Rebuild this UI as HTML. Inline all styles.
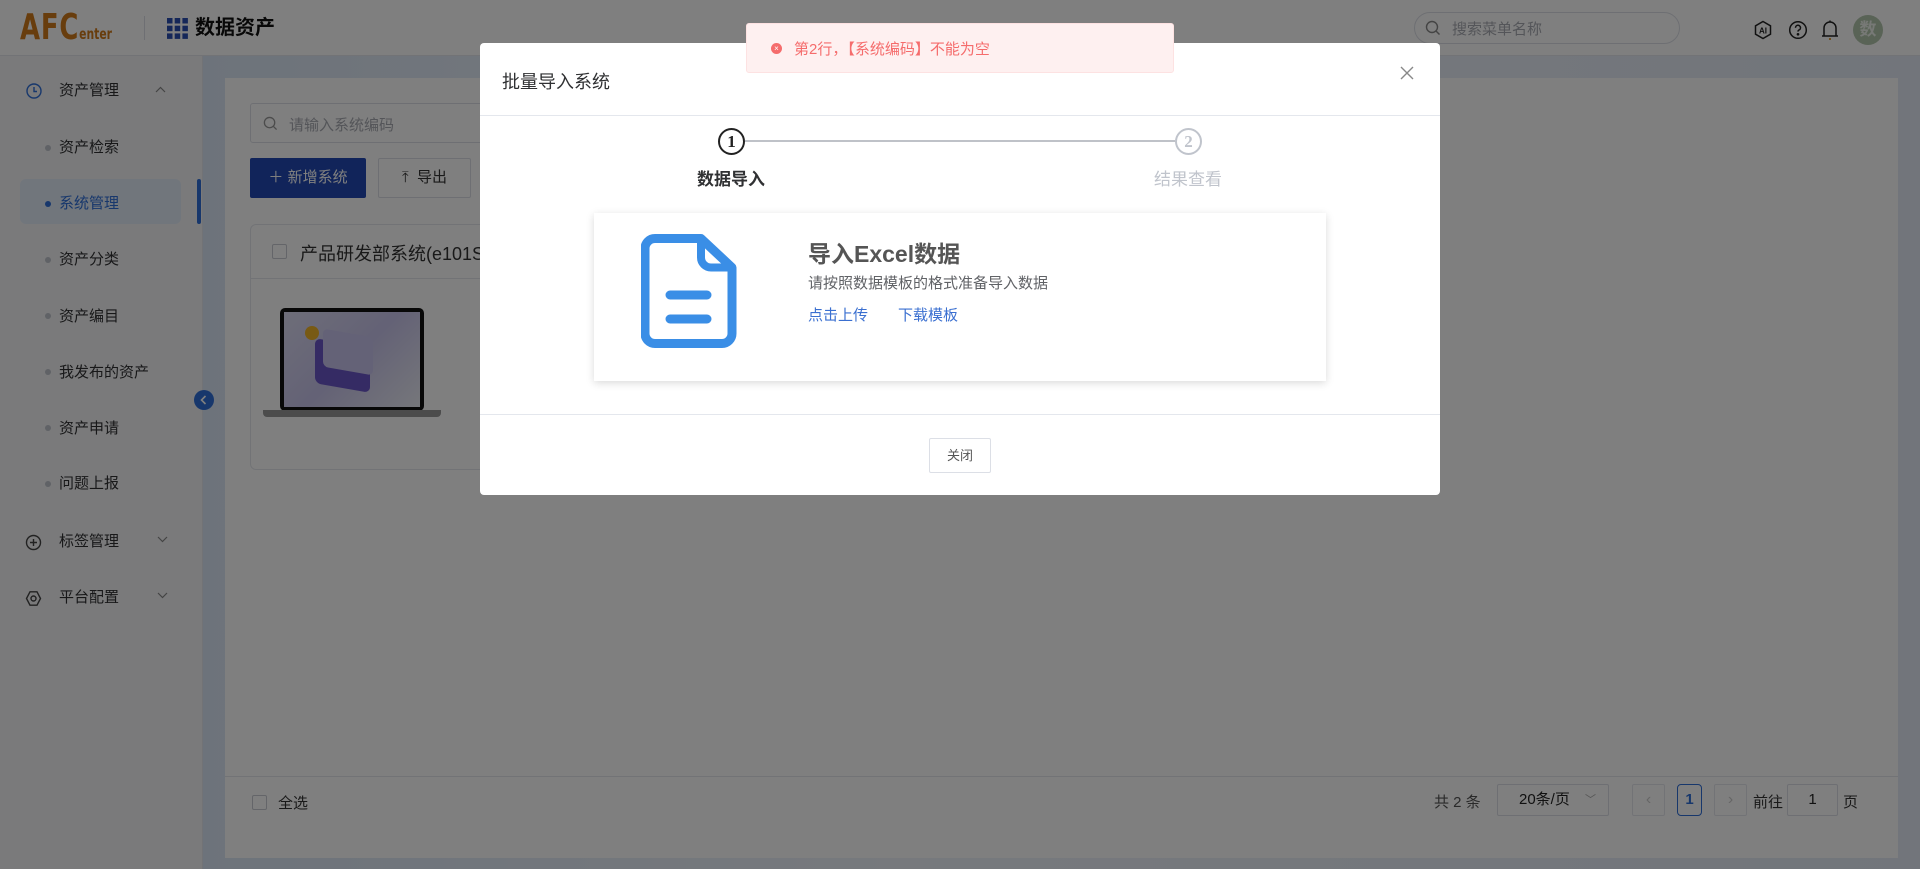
<!DOCTYPE html>
<html><head><meta charset="utf-8"><style>
*{box-sizing:border-box;margin:0;padding:0}
body{width:1920px;height:869px;overflow:hidden;position:relative;font-family:"Liberation Sans","Noto Sans CJK SC",sans-serif;background:#fff;color:#303133}
.abs{position:absolute}
.hdr{left:0;top:0;width:1920px;height:56px;background:#fff;border-bottom:1px solid #e4e7ed}
.side{left:0;top:56px;width:203px;height:813px;background:#f4f5f7;border-right:1px solid #e4e7ed}
.mi{position:absolute;left:59px;font-size:15px;color:#303133;line-height:20px}
.dot{position:absolute;left:45px;width:6px;height:6px;border-radius:50%;background:#c0c4cc}
.main{left:203px;top:56px;width:1717px;height:813px;background:linear-gradient(90deg,#dbe7f6,#eef3fb 40%,#e4ebf6)}
.panel{left:225px;top:78px;width:1673px;height:780px;background:#fff}
.ov{left:0;top:0;width:1920px;height:869px;background:rgba(0,0,0,.5)}
.modal{left:480px;top:43px;width:960px;height:452px;background:#fff;border-radius:4px}
</style></head><body>
<div class="abs hdr">
 <div class="abs" style="left:20px;top:6px;font-family:'DejaVu Sans Condensed','Liberation Sans',sans-serif;font-weight:bold;color:#d07a1a;font-size:36px;letter-spacing:1px;line-height:44px;transform:scaleX(.8);transform-origin:left">AFC<span style="font-size:15px;letter-spacing:0">enter</span></div>
 <div class="abs" style="left:144px;top:16px;width:1px;height:24px;background:#dcdfe6"></div>
 <svg class="abs" style="left:167px;top:18px" width="21" height="21" viewBox="0 0 21 21" fill="#2b4fb3"><rect x="0" y="0" width="5.5" height="5.5"/><rect x="7.7" y="0" width="5.5" height="5.5"/><rect x="15.4" y="0" width="5.5" height="5.5"/><rect x="0" y="7.7" width="5.5" height="5.5"/><rect x="7.7" y="7.7" width="5.5" height="5.5"/><rect x="15.4" y="7.7" width="5.5" height="5.5"/><rect x="0" y="15.4" width="5.5" height="5.5"/><rect x="7.7" y="15.4" width="5.5" height="5.5"/><rect x="15.4" y="15.4" width="5.5" height="5.5"/></svg>
 <div class="abs" style="left:195px;top:15px;font-size:20px;font-weight:bold;color:#111;line-height:26px">数据资产</div>
 <div class="abs" style="left:1414px;top:12px;width:266px;height:32px;border:1px solid #dcdfe6;border-radius:16px"></div>
 <svg class="abs" style="left:1425px;top:20px" width="16" height="16" viewBox="0 0 16 16" fill="none" stroke="#888" stroke-width="1.4"><circle cx="7" cy="7" r="5.5"/><path d="M11 11l3.5 3.5"/></svg>
 <div class="abs" style="left:1452px;top:18px;font-size:15px;color:#a8abb2">搜索菜单名称</div>
 <svg class="abs" style="left:1753px;top:20px" width="20" height="20" viewBox="0 0 20 20" fill="none" stroke="#222" stroke-width="1.5"><path d="M10 1.5l7.5 4.3v8.4L10 18.5 2.5 14.2V5.8z"/><text x="10" y="13.5" font-size="8" font-weight="bold" text-anchor="middle" fill="#222" stroke="none" font-family="Liberation Sans">AI</text></svg>
 <svg class="abs" style="left:1788px;top:20px" width="20" height="20" viewBox="0 0 20 20" fill="none" stroke="#222" stroke-width="1.5"><circle cx="10" cy="10" r="8.3"/><path d="M7.5 7.8a2.5 2.5 0 1 1 3.3 2.3c-.6.3-.8.8-.8 1.5"/><circle cx="10" cy="14.3" r=".6" fill="#222"/></svg>
 <svg class="abs" style="left:1820px;top:19px" width="20" height="22" viewBox="0 0 20 22" fill="none" stroke="#222" stroke-width="1.5"><path d="M4 17V9a6 6 0 0 1 12 0v8M2 17h16"/><path d="M9 20h2" stroke="#d08000"/><path d="M10 1.5v1.5"/></svg>
 <div class="abs" style="left:1853px;top:15px;width:30px;height:30px;border-radius:50%;background:#b3c7ad;color:#eef3ec;font-size:17px;font-weight:bold;text-align:center;line-height:30px">数</div>
</div>
<div class="abs side">
 <svg class="abs" style="left:26px;top:27px" width="16" height="16" viewBox="0 0 16 16" fill="none" stroke="#2e6fd9" stroke-width="1.4"><circle cx="8" cy="8" r="7"/><path d="M8 4v4.5h3"/></svg>
 <div class="mi" style="top:25px;color:#303133">资产管理</div>
 <svg class="abs" style="left:155px;top:30px" width="11" height="7" viewBox="0 0 11 7" fill="none" stroke="#888" stroke-width="1.2"><path d="M1 6l4.5-4.5L10 6"/></svg>
 <div class="dot" style="top:89px"></div><div class="mi" style="top:82px">资产检索</div>
 <div class="abs" style="left:20px;top:123px;width:161px;height:45px;background:#e3ecf9;border-radius:6px"></div>
 <div class="dot" style="top:145px;background:#2e6fd9"></div><div class="mi" style="top:138px;color:#2e6fd9">系统管理</div>
 <div class="abs" style="left:197px;top:123px;width:4px;height:45px;background:#2e6fd9;border-radius:2px"></div>
 <div class="dot" style="top:201px"></div><div class="mi" style="top:194px">资产分类</div>
 <div class="dot" style="top:257px"></div><div class="mi" style="top:251px">资产编目</div>
 <div class="dot" style="top:313px"></div><div class="mi" style="top:307px">我发布的资产</div>
 <div class="dot" style="top:369px"></div><div class="mi" style="top:363px">资产申请</div>
 <div class="dot" style="top:425px"></div><div class="mi" style="top:418px">问题上报</div>
 <svg class="abs" style="left:25px;top:478px" width="17" height="17" viewBox="0 0 17 17" fill="none" stroke="#444" stroke-width="1.4"><circle cx="8.5" cy="8.5" r="7"/><path d="M8.5 5v7M5 8.5h7"/></svg>
 <div class="mi" style="top:476px">标签管理</div>
 <svg class="abs" style="left:157px;top:480px" width="11" height="7" viewBox="0 0 11 7" fill="none" stroke="#888" stroke-width="1.2"><path d="M1 1l4.5 4.5L10 1"/></svg>
 <svg class="abs" style="left:25px;top:534px" width="17" height="17" viewBox="0 0 17 17" fill="none" stroke="#444" stroke-width="1.4"><path d="M5 1.8h7l3.5 6.7-3.5 6.7H5L1.5 8.5z"/><circle cx="8.5" cy="8.5" r="2.5"/></svg>
 <div class="mi" style="top:532px">平台配置</div>
 <svg class="abs" style="left:157px;top:536px" width="11" height="7" viewBox="0 0 11 7" fill="none" stroke="#888" stroke-width="1.2"><path d="M1 1l4.5 4.5L10 1"/></svg>
</div>
<div class="abs main"></div>
<div class="abs" style="left:194px;top:390px;width:20px;height:20px;border-radius:50%;background:#2e6fd9"><svg width="20" height="20" viewBox="0 0 20 20" fill="none" stroke="#fff" stroke-width="1.6"><path d="M11.5 6l-4 4 4 4"/></svg></div>
<div class="abs panel">
 <div class="abs" style="left:25px;top:25px;width:300px;height:40px;border:1px solid #dcdfe6;border-radius:3px"></div>
 <svg class="abs" style="left:38px;top:38px" width="15" height="15" viewBox="0 0 16 16" fill="none" stroke="#999" stroke-width="1.4"><circle cx="7" cy="7" r="5.5"/><path d="M11 11l3.5 3.5"/></svg>
 <div class="abs" style="left:64px;top:36px;font-size:15px;color:#a8abb2">请输入系统编码</div>
 <div class="abs" style="left:25px;top:80px;width:116px;height:40px;background:#2349b5;border-radius:2px;color:#fff;font-size:15px;line-height:40px;text-align:center">＋ 新增系统</div>
 <div class="abs" style="left:153px;top:80px;width:93px;height:40px;border:1px solid #dcdfe6;border-radius:2px;color:#333;font-size:15px;line-height:38px;text-align:center">⤒&nbsp; 导出</div>
 <div class="abs" style="left:25px;top:146px;width:400px;height:246px;border:1px solid #e4e7ed;border-radius:6px"></div>
 <div class="abs" style="left:25px;top:200px;width:400px;height:1px;background:#e4e7ed"></div>
 <div class="abs" style="left:47px;top:166px;width:15px;height:15px;border:1px solid #c8cbd2;border-radius:2px"></div>
 <div class="abs" style="left:75px;top:162px;font-size:18px;color:#333">产品研发部系统(e101S</div>
 <div class="abs" style="left:55px;top:230px;width:144px;height:103px;background:#111;border-radius:5px;padding:4px"><div style="width:100%;height:100%;background:linear-gradient(135deg,#dcdcf2,#c8c4ec 50%,#eceef6)"></div></div>
 <div class="abs" style="left:90px;top:265px;width:55px;height:45px;background:#6a56c8;border-radius:6px;transform:skewY(10deg)"></div>
 <div class="abs" style="left:98px;top:255px;width:50px;height:38px;background:#c9c4ee;border-radius:5px;transform:skewY(10deg)"></div>
 <div class="abs" style="left:80px;top:248px;width:14px;height:14px;border-radius:50%;background:#f0b428"></div>
 <div class="abs" style="left:38px;top:332px;width:178px;height:7px;background:#999;border-radius:0 0 4px 4px"></div>
 <div class="abs" style="left:0;top:698px;width:1673px;height:1px;background:#e4e7ed"></div>
 <div class="abs" style="left:27px;top:717px;width:15px;height:15px;border:1px solid #c8cbd2;border-radius:2px"></div>
 <div class="abs" style="left:53px;top:714px;font-size:15px;color:#333">全选</div>
 <div class="abs" style="left:1209px;top:713px;font-size:15px;color:#555">共 2 条</div>
 <div class="abs" style="left:1272px;top:706px;width:112px;height:32px;border:1px solid #dcdfe6;border-radius:2px;font-size:15px;line-height:30px;padding-left:21px;color:#222">20条/页<span style="position:absolute;right:12px;color:#aaa;font-size:11px">﹀</span></div>
 <div class="abs" style="left:1407px;top:706px;width:33px;height:32px;border:1px solid #e4e7ed;border-radius:2px;color:#ccc;text-align:center;line-height:30px">‹</div>
 <div class="abs" style="left:1452px;top:706px;width:25px;height:32px;border:1px solid #2e6fd9;border-radius:4px;color:#2e6fd9;text-align:center;line-height:30px;font-weight:bold;font-size:15px">1</div>
 <div class="abs" style="left:1489px;top:706px;width:33px;height:32px;border:1px solid #e4e7ed;border-radius:2px;color:#ccc;text-align:center;line-height:30px">›</div>
 <div class="abs" style="left:1528px;top:713px;font-size:15px;color:#333">前往</div>
 <div class="abs" style="left:1562px;top:706px;width:51px;height:32px;border:1px solid #dcdfe6;border-radius:2px;text-align:center;line-height:30px;font-size:15px;color:#222">1</div>
 <div class="abs" style="left:1618px;top:713px;font-size:15px;color:#333">页</div>
</div>
<div class="abs ov"></div>
<div class="abs modal">
 <div class="abs" style="left:22px;top:25px;font-size:18px;color:#303133">批量导入系统</div>
 <svg class="abs" style="left:919px;top:22px" width="16" height="16" viewBox="0 0 16 16" stroke="#888" stroke-width="1.4"><path d="M2 2l12 12M14 2L2 14"/></svg>
 <div class="abs" style="left:0;top:72px;width:960px;height:1px;background:#e4e7ed"></div>
 <div class="abs" style="left:265px;top:97px;width:430px;height:2px;background:#bfc2c8"></div>
 <div class="abs" style="left:238px;top:85px;width:27px;height:27px;border:2px solid #222;border-radius:50%;background:#fff;text-align:center;line-height:23px;font-size:17px;font-weight:bold;color:#222;font-family:'Liberation Serif',serif">1</div>
 <div class="abs" style="left:695px;top:85px;width:27px;height:27px;border:2px solid #c0c4cc;border-radius:50%;background:#fff;text-align:center;line-height:23px;font-size:17px;font-weight:bold;color:#c0c4cc;font-family:'Liberation Serif',serif">2</div>
 <div class="abs" style="left:191px;top:122px;width:120px;text-align:center;font-size:17px;font-weight:bold;color:#303133">数据导入</div>
 <div class="abs" style="left:648px;top:122px;width:120px;text-align:center;font-size:17px;color:#c0c4cc">结果查看</div>
 <div class="abs" style="left:114px;top:170px;width:732px;height:168px;background:#fff;box-shadow:0 2px 8px rgba(0,0,0,.15)">
  <svg class="abs" style="left:47px;top:21px" width="96" height="115" viewBox="0 0 96 115" fill="none" stroke="#3a8ee6" stroke-width="9" stroke-linejoin="round"><path d="M14 4.5h46l31 29v66a10 10 0 0 1-10 10H14a10 10 0 0 1-10-10V14.5a10 10 0 0 1 10-10z"/><path d="M60 4.5v19a10 10 0 0 0 10 10h21" stroke-width="8"/><path d="M29 61h37M29 85h37" stroke-width="9" stroke-linecap="round"/></svg>
  <div class="abs" style="left:214px;top:22px;font-size:23px;font-weight:bold;color:#555">导入Excel数据</div>
  <div class="abs" style="left:214px;top:59px;font-size:15px;color:#606266">请按照数据模板的格式准备导入数据</div>
  <div class="abs" style="left:214px;top:91px;font-size:15px;color:#3a6fd0">点击上传</div>
  <div class="abs" style="left:304px;top:91px;font-size:15px;color:#3a6fd0">下载模板</div>
 </div>
 <div class="abs" style="left:0;top:371px;width:960px;height:1px;background:#e4e7ed"></div>
 <div class="abs" style="left:449px;top:395px;width:62px;height:35px;border:1px solid #dcdfe6;border-radius:2px;text-align:center;line-height:33px;font-size:13px;color:#555">关闭</div>
</div>
<div class="abs" style="left:746px;top:23px;width:428px;height:50px;background:#fef0f0;border:1px solid #fde2e2;border-radius:3px">
 <div class="abs" style="left:24px;top:19px;width:11px;height:11px;border-radius:50%;background:#f56c6c;color:#fff;font-size:8px;line-height:11px;text-align:center">×</div>
 <div class="abs" style="left:47px;top:14px;font-size:15px;color:#f56c6c">第2行，【系统编码】不能为空</div>
</div>
</body></html>
